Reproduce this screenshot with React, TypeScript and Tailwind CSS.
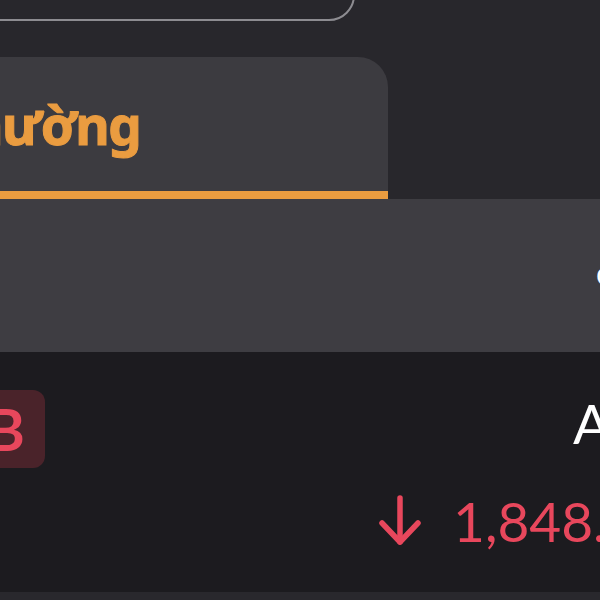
import React from 'react';

const ArrowDown = () => (
  <svg width="46" height="54" viewBox="0 0 46 54" fill="none" stroke="currentColor" strokeWidth="5.5" strokeLinecap="round" strokeLinejoin="round">
    <path d="M23 3v44" />
    <path d="M5 28l18 19 18-19" />
  </svg>
);

export default function App() {
  return (
    <div className="w-[600px] h-[600px] overflow-hidden bg-[#28272c] flex flex-col font-['Noto_Sans',sans-serif]">
      {/* search box edge */}
      <div className="h-[57px] shrink-0">
        <div className="-mt-[60px] -ml-[25px] h-[81px] w-[380px] rounded-[26px] border-2 border-[#8d8c91]" />
      </div>

      {/* tabs */}
      <div className="h-[142px] shrink-0 flex">
        <div className="w-[388px] rounded-tr-[30px] bg-[#3c3b40] flex flex-col">
          <div className="flex-1 pt-[41px]">
            <span className="block -ml-[60px] text-[53px] leading-none font-bold tracking-[-1.5px] text-[#ea9c40] whitespace-nowrap [-webkit-text-stroke:1px_#ea9c40]">
              Thường
            </span>
          </div>
          <div className="h-[8px] bg-[#ea9c40]" />
        </div>
      </div>

      {/* filter panel */}
      <div className="h-[153px] shrink-0 bg-[#3e3d42] flex justify-end pt-[60px]">
        <span className="-mr-[14px] text-[30px] leading-none text-white">o</span>
      </div>

      {/* list row */}
      <div className="h-[240px] shrink-0 bg-[#1c1b1f] flex justify-between items-start font-['Lato',sans-serif]">
        <div className="mt-[38px] -ml-[33px] w-[78px] h-[78px] rounded-[12px] bg-[#4a232a] flex items-center justify-center text-[57px] leading-none font-bold text-[#e8475c]">
          B
        </div>
        <div className="w-[310px] -mr-[87px] mt-[44px] flex flex-col items-start gap-[43px]">
          <span className="ml-[196px] text-[55px] leading-none text-white whitespace-nowrap">ACB</span>
          <div className="flex items-center gap-[30px] text-[#e8475c]">
            <ArrowDown />
            <span className="text-[55px] leading-none whitespace-nowrap">1,848.00</span>
          </div>
        </div>
      </div>

      <div className="flex-1 bg-[#29282d]" />
    </div>
  );
}
